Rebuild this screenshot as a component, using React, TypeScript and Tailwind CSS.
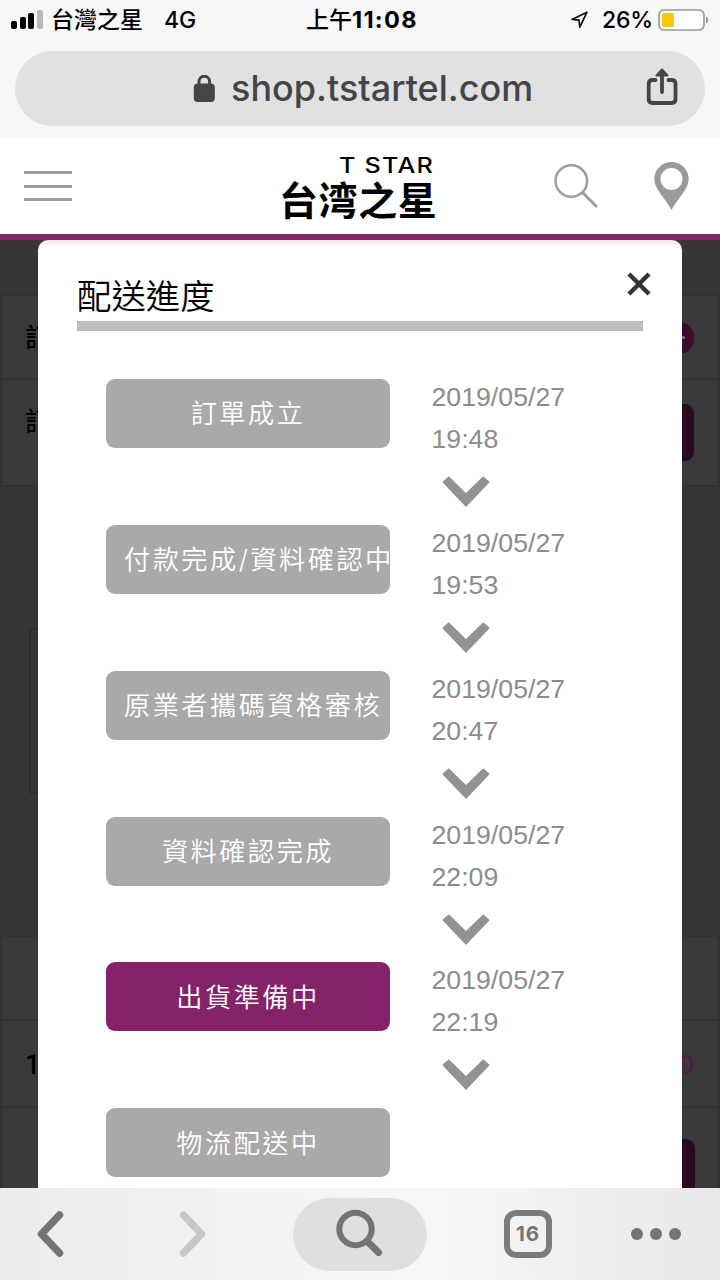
type Step = { label: string; date?: string; time?: string; active?: boolean; overflow?: boolean };

const steps: Step[] = [
  { label: '訂單成立', date: '2019/05/27', time: '19:48' },
  { label: '付款完成/資料確認中', date: '2019/05/27', time: '19:53', overflow: true },
  { label: '原業者攜碼資格審核', date: '2019/05/27', time: '20:47', overflow: true },
  { label: '資料確認完成', date: '2019/05/27', time: '22:09' },
  { label: '出貨準備中', date: '2019/05/27', time: '22:19', active: true },
  { label: '物流配送中' },
];

function StatusBar() {
  return (
    <div className="flex h-10 items-center pl-[11px] text-[23px] leading-10 whitespace-nowrap text-black">
      <div className="-mt-[2px] flex h-[19px] w-8 shrink-0 items-end gap-[2.600px]">
        <i className="h-2 w-[6px] rounded-[2px] bg-black" />
        <i className="h-[12px] w-[6px] rounded-[2px] bg-black" />
        <i className="h-[15.500px] w-[6px] rounded-[2px] bg-black" />
        <i className="h-[19px] w-[6px] rounded-[2px] bg-[#b9b9b9]" />
      </div>
      <span className="ml-2 w-[92px] shrink-0 font-medium">台灣之星</span>
      <span className="ml-[21px] w-[142px] shrink-0 font-medium">4G</span>
      <span className="w-[46px] shrink-0 font-medium">上午</span>
      <span className="w-[218px] shrink-0 text-[23.500px] font-bold tracking-[1.300px]">11:08</span>
      <svg width="19" height="18" viewBox="0 0 19 18" className="shrink-0" fill="none" stroke="#111" strokeWidth="1.7" strokeLinejoin="round">
        <path d="M17 1.2 2 8.4l7 .8.8 7z" />
      </svg>
      <span className="ml-[13px] w-[56px] shrink-0 font-medium tracking-[-0.2px]">26%</span>
      <svg width="53" height="23" viewBox="0 0 53 23" className="shrink-0">
        <rect x="1" y="1" width="45" height="20" rx="5" fill="#fff" stroke="#999" strokeWidth="1.7" />
        <rect x="4" y="4" width="12" height="14" rx="1.5" fill="#fbc90b" />
        <path d="M48 7.500c3 .5 3 6.500 0 7z" fill="#999" />
      </svg>
    </div>
  );
}

function AddressBar() {
  return (
    <div className="mx-[15px] mt-[11px] flex h-[75px] items-center rounded-full bg-[#e1e1e2] text-[#454547]">
      <svg width="22" height="28" viewBox="0 0 22 28" className="ml-[178px] shrink-0">
        <rect x=".8" y="8.500" width="21" height="18.500" rx="4" fill="#454547" />
        <path d="M6 11V6.500a5.300 5.300 0 0 1 10.600 0V11" fill="none" stroke="#454547" strokeWidth="3" />
      </svg>
      <span className="-mt-[2px] ml-4 w-[400px] text-[36px] leading-none font-medium">shop.tstartel.com</span>
      <svg width="32" height="40" viewBox="0 0 32 40" className="-mt-[3px] ml-[15px] shrink-0" fill="none" stroke="#454547" strokeWidth="3.800" strokeLinecap="round" strokeLinejoin="round">
        <path d="M9.500 13H6.500Q2.700 13 2.700 16.800V32q0 4 4 4H25.500q4 0 4-4V16.800Q29.500 13 25.500 13h-3M16 25V5" />
        <path d="m10.500 8.500 5.500-6 5.500 6z" fill="#454547" strokeWidth="2" />
      </svg>
    </div>
  );
}

function SiteHeader() {
  return (
    <header className="flex h-[102px] shrink-0 items-center border-b-[6px] border-[#842568] bg-white pl-6 pr-[29px]">
      <div className="flex w-12 shrink-0 flex-col gap-[10.500px]">
        <i className="h-[3px] bg-[#9d9d9d]" />
        <i className="h-[3px] bg-[#9d9d9d]" />
        <i className="h-[3px] bg-[#9d9d9d]" />
      </div>
      <div className="ml-[207px] flex w-[161px] shrink-0 flex-col text-black">
        <span className="mt-[1px] origin-right scale-x-120 pr-[5px] text-right text-[21px] leading-[24px] font-medium tracking-[1px]">T STAR</span>
        <span className="mt-[4px] -mb-px text-[39px] leading-[38px] font-bold tracking-[0.600px] whitespace-nowrap">台湾之星</span>
      </div>
      <svg width="46" height="46" viewBox="0 0 46 46" className="ml-[113px] shrink-0" fill="none" stroke="#9d9d9d" strokeLinecap="round">
        <circle cx="18.300" cy="18" r="15.800" strokeWidth="2.500" />
        <path d="m30 30 13 13" strokeWidth="3" />
      </svg>
      <svg width="35" height="49" viewBox="0 0 35 49" className="ml-auto mr-[2px] shrink-0">
        <path fillRule="evenodd" d="M17.500 0A17.200 17.200 0 0 0 .3 17.200C.3 27 12 37 17.500 48 23 37 34.700 27 34.700 17.200A17.200 17.200 0 0 0 17.500 0m0 6a11 11 0 1 1 0 22 11 11 0 0 1 0-22" fill="#999a9c" />
      </svg>
    </header>
  );
}

function OrderPage() {
  return (
    <div className="flex h-full flex-col overflow-hidden bg-[#363636] pt-[54px] text-[26px] leading-none text-black">
      <div className="h-[86px] shrink-0 border-2 border-[#323232] bg-[#3a3a3a]">
        <div className="flex items-center justify-between pt-[26px] pr-6 pl-[23px]">
          <span className="font-medium">訂單編號</span>
          <i className="flex h-[32px] w-[30px] items-center justify-end rounded-full bg-[#3c0c2f] pr-[9px]">
            <b className="-mt-[2px] h-[3px] w-2 rounded-full bg-[#777]" />
          </i>
        </div>
      </div>
      <div className="-mt-0.5 h-[109px] shrink-0 border-2 border-[#323232] bg-[#3a3a3a]">
        <div className="flex items-start justify-between pt-6 pr-6 pl-[23px]">
          <span className="pt-[5px] font-medium">訂單狀態</span>
          <i className="h-[57px] w-20 rounded-[9px] bg-[#290b21]" />
        </div>
      </div>
      <div className="mr-[48px] ml-[29px] mt-[141px] h-[166px] shrink-0 border-2 border-[#2f2f2f]" />
      <div className="mt-[141px] h-[86px] shrink-0 border-2 border-[#323232] bg-[#3a3a3a]" />
      <div className="-mt-0.5 flex h-[89px] shrink-0 items-center justify-between border-2 border-[#323232] bg-[#3a3a3a] pt-[4px] pr-6 pl-[23px] text-[27px]">
        <span className="font-['Roboto',sans-serif] font-medium">1</span>
        <span className="font-['Liberation_Sans',sans-serif] text-[#581744]">0</span>
      </div>
      <div className="-mt-0.5 flex h-[120px] shrink-0 justify-end border-2 border-[#323232] bg-[#3a3a3a] pt-[31px] pr-[23px]">
        <i className="h-[57px] w-20 rounded-[9px] bg-[#290b21]" />
      </div>
    </div>
  );
}

function StepRow({ label, date, time, active, overflow }: Step) {
  return (
    <li className="flex h-[145.850px] items-start">
      <div
        className={`flex h-[69px] w-[284px] shrink-0 items-center overflow-hidden rounded-[9px] pt-px text-[26.200px] font-[350] tracking-[2.500px] whitespace-nowrap text-white ${
          active ? 'bg-[#84236a]' : 'bg-[#a9a9a9]'
        } ${overflow ? 'justify-start pl-[18px]' : 'justify-center'}`}
      >
        {label}
      </div>
      {date && (
        <div className="ml-[41.500px] font-['Liberation_Sans',sans-serif] text-[26.700px] leading-[42px] text-[#8c8c8c]">
          <p className="-mt-[3px]">{date}</p>
          <p>{time}</p>
          <svg width="48" height="33" viewBox="0 0 48 33" className="mt-[15px] ml-[10px]">
            <path d="M.2 7 6.800 1.200 24 18 41.200 1.200l6.600 5.800L24 32z" fill="#929292" />
          </svg>
        </div>
      )}
    </li>
  );
}

function ProgressModal() {
  return (
    <section className="absolute inset-x-[38px] top-0 bottom-0 overflow-hidden rounded-t-[10px] bg-white bg-linear-to-b from-[#e9e9eb] to-white to-[8px] px-[39px] pt-[30px]">
      <div className="flex h-[51px] items-start justify-between">
        <h1 className="pt-[2px] text-[34.400px] leading-[50px] font-[350] text-black">配送進度</h1>
        <svg width="24" height="24" viewBox="0 0 24 24" className="mt-[1.500px] -mr-[8px]" stroke="#333" strokeWidth="4.500">
          <path d="m2 2 20 20M22 2 2 22" />
        </svg>
      </div>
      <div className="h-[10px] bg-[#bebebe]" />
      <ol className="mt-12 ml-[29px]">
        {steps.map((s) => (
          <StepRow key={s.label} {...s} />
        ))}
      </ol>
    </section>
  );
}

function Toolbar() {
  return (
    <nav className="flex h-[92px] shrink-0 items-center bg-linear-to-r from-[#ececee] via-[#f7f7f7] via-60% to-[#e9e7e9] text-[#747474]">
      <svg width="28" height="48" viewBox="0 0 28 48" className="ml-9 shrink-0" fill="none" stroke="#747474" strokeWidth="7.500" strokeLinecap="round" strokeLinejoin="round">
        <path d="M23.500 5 5.500 24l18 19" />
      </svg>
      <svg width="28" height="48" viewBox="0 0 28 48" className="ml-[114px] shrink-0" fill="none" stroke="#c7c7c7" strokeWidth="7.500" strokeLinecap="round" strokeLinejoin="round">
        <path d="M5.500 5 23.500 24l-18 19" />
      </svg>
      <div className="ml-[87px] flex h-[73px] w-[134px] shrink-0 items-center rounded-full bg-[#dfdfdf] pl-[42px]">
        <svg width="50" height="50" viewBox="0 0 50 50" fill="none" stroke="#747474" strokeLinecap="round">
          <circle cx="20.500" cy="20" r="16.200" strokeWidth="6" />
          <path d="m33 33 10.500 10.500" strokeWidth="7" />
        </svg>
      </div>
      <div className="ml-[77px] flex size-12 shrink-0 items-center justify-center rounded-[12px] border-[6px] border-[#7b7b7b] text-[20.500px] font-bold tracking-[0.8px]">16</div>
      <div className="ml-[79px] flex gap-[7px]">
        <i className="size-3 rounded-full bg-[#747474]" />
        <i className="size-3 rounded-full bg-[#747474]" />
        <i className="size-3 rounded-full bg-[#747474]" />
      </div>
    </nav>
  );
}

export default function App() {
  return (
    <div className="flex h-[1280px] w-[720px] flex-col overflow-hidden bg-white font-['Inter','Noto_Sans_CJK_TC',sans-serif]">
      <div className="h-[138px] shrink-0 bg-[#f7f7f8]">
        <StatusBar />
        <AddressBar />
      </div>
      <SiteHeader />
      <main className="relative h-[948px] shrink-0">
        <OrderPage />
        <ProgressModal />
      </main>
      <Toolbar />
    </div>
  );
}
